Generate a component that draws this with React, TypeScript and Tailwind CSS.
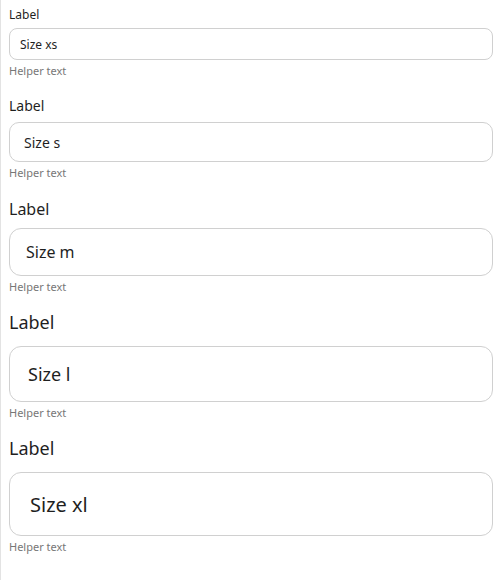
const FONT = "font-['Noto_Sans',sans-serif]";

type Size = {
  key: string;
  label: string;
  input: string;
  value: string;
};

const SIZES: Size[] = [
  { key: 'xs', label: 'text-[12px] leading-[22px] mb-0.5', input: 'h-8 rounded-lg px-2.5 text-[12px]', value: 'Size xs' },
  { key: 's', label: 'text-[14px] leading-6 mb-1', input: 'h-10 rounded-[10px] px-3.5 text-[14px]', value: 'Size s' },
  { key: 'm', label: 'text-[16px] leading-[26px] mb-1.5', input: 'h-12 rounded-xl px-4 text-[16px]', value: 'Size m' },
  { key: 'l', label: 'text-[18px] leading-6 mb-3', input: 'h-14 rounded-xl px-[18px] text-[18px]', value: 'Size l' },
  { key: 'xl', label: 'text-[18px] leading-6 mb-3', input: 'h-16 rounded-xl px-5 text-[20px]', value: 'Size xl' },
];

export default function App() {
  return (
    <div className={`${FONT} min-h-[580px] w-[500px] border-l border-[#e3e3e3] bg-white pl-2 pr-[7px] pt-1 text-[#1f1f1f]`}>
      <div className="flex flex-col gap-[15px]">
        {SIZES.map((s) => (
          <div key={s.key} className="flex flex-col">
            <label className={`block ${s.label}`}>Label</label>
            <input
              readOnly
              value={s.value}
              className={`w-full border border-[#d0d0d0] bg-white text-[#1f1f1f] outline-none ${s.input}`}
            />
            <p className="mt-[3px] text-[11px] leading-4 text-[#777]">Helper text</p>
          </div>
        ))}
      </div>
    </div>
  );
}
